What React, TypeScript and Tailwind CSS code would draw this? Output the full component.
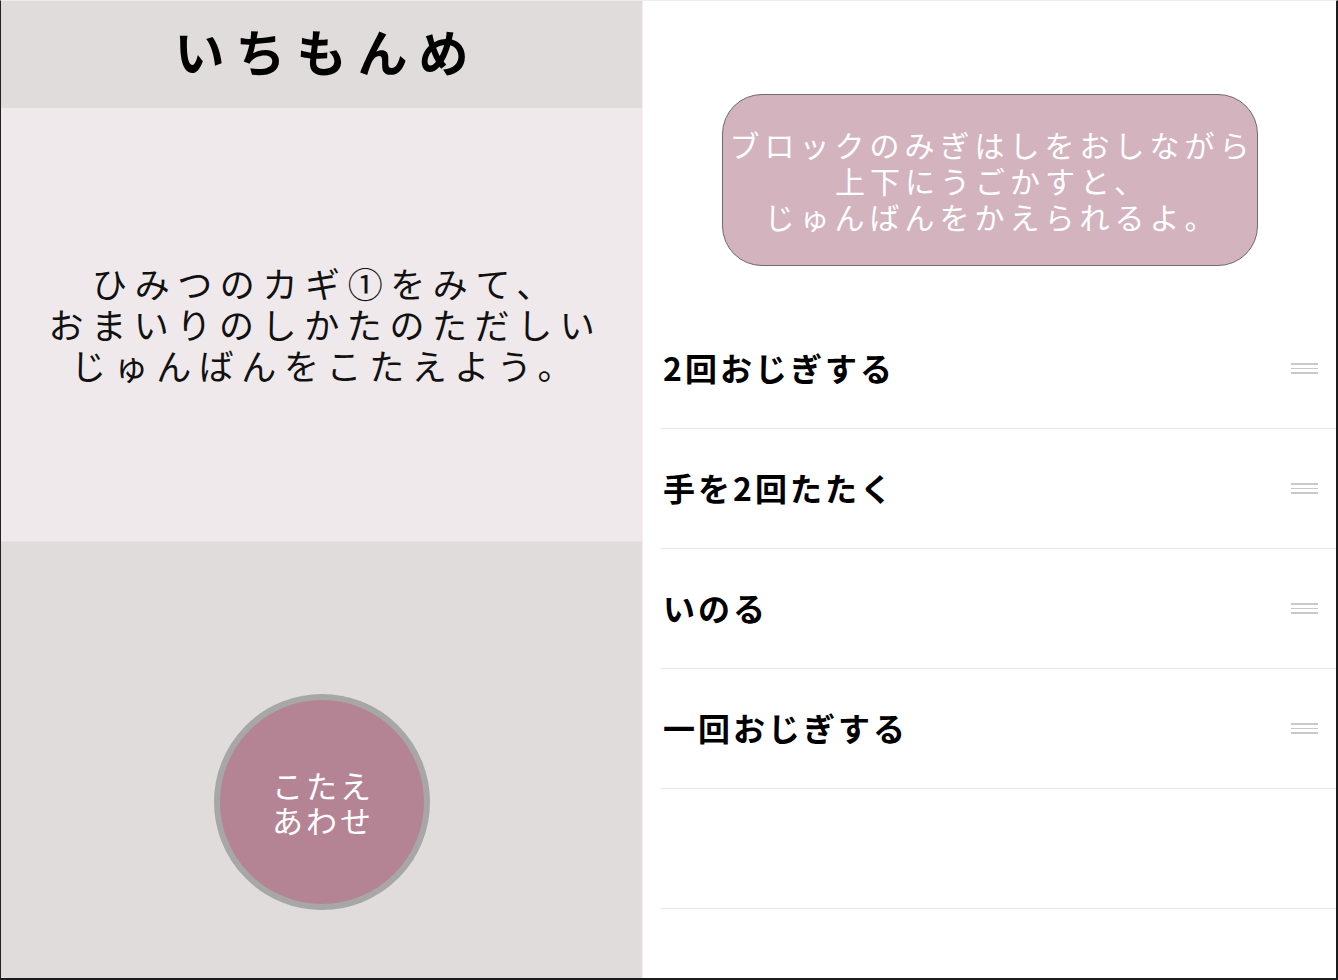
const font = { fontFamily: '"Noto Sans CJK JP", "Noto Sans", sans-serif' };

const steps = ["2回おじぎする", "手を2回たたく", "いのる", "一回おじぎする"];

function Handle() {
  return (
    <div className="flex w-[27px] flex-col gap-[2.6px]">
      <span className="block h-[1.7px] bg-[#c9c9cd]" />
      <span className="block h-[1.7px] bg-[#c9c9cd]" />
      <span className="block h-[1.7px] bg-[#c9c9cd]" />
    </div>
  );
}

export default function App() {
  return (
    <div
      className="flex h-[980px] w-[1338px] border-t border-l border-t-[#ececec] border-l-[#222] border-r-2 border-b-2 border-r-[#1c1c1c] border-b-[#1c1c1c] bg-white"
      style={font}
    >
      {/* 左パネル */}
      <div className="flex w-[642px] flex-col border-r border-[#f3eef0]">
        <div className="flex h-[107px] items-center justify-center bg-[#e1dcdc]">
          <h1 className="pb-[10px] pl-[11px] text-[50px] font-bold leading-[60px] tracking-[11px] text-black">
            いちもんめ
          </h1>
        </div>
        <div className="flex h-[434px] items-center justify-center border-b border-[#e6e1e2] bg-[#efe9eb]">
          <p className="whitespace-nowrap pb-[2px] pl-[8px] text-center text-[35px] leading-[41px] tracking-[7.6px] text-[#111]">
            ひみつのカギ①をみて、
            <br />
            おまいりのしかたのただしい
            <br />
            じゅんばんをこたえよう。
          </p>
        </div>
        <div className="flex flex-1 items-start justify-center bg-[#e1dcdc] pt-[152px]">
          <button
            type="button"
            className="flex h-[216px] w-[216px] items-center justify-center rounded-full border-[6px] border-[#a7a7a7] bg-[#b48494] text-[31px] leading-[35px] tracking-[3px] text-white"
            style={font}
          >
            <span className="pl-[3px]">
              こたえ
              <br />
              あわせ
            </span>
          </button>
        </div>
      </div>

      {/* 右パネル */}
      <div className="flex flex-1 flex-col pt-[93px]">
        <div className="mx-auto flex h-[172px] w-[536px] items-center justify-center rounded-[40px] border border-[#6e6a6b] bg-[#d3b3bd]">
          <p className="whitespace-nowrap pl-[5px] text-center text-[30px] leading-[36px] tracking-[5px] text-white">
            ブロックのみぎはしをおしながら
            <br />
            上下にうごかすと、
            <br />
            じゅんばんをかえられるよ。
          </p>
        </div>
        <ul className="ml-[18px] mt-[43px]">
          {steps.map((s) => (
            <li
              key={s}
              className="flex h-[120px] items-center justify-between border-b-[1.5px] border-[#e6e6e8] pl-[2px] pr-[18px]"
            >
              <span className="mb-[4px] text-[32px] font-bold tracking-[3px] text-black">{s}</span>
              <Handle />
            </li>
          ))}
          <li className="h-[120px] border-b-[1.5px] border-[#e6e6e8]" />
        </ul>
      </div>
    </div>
  );
}
